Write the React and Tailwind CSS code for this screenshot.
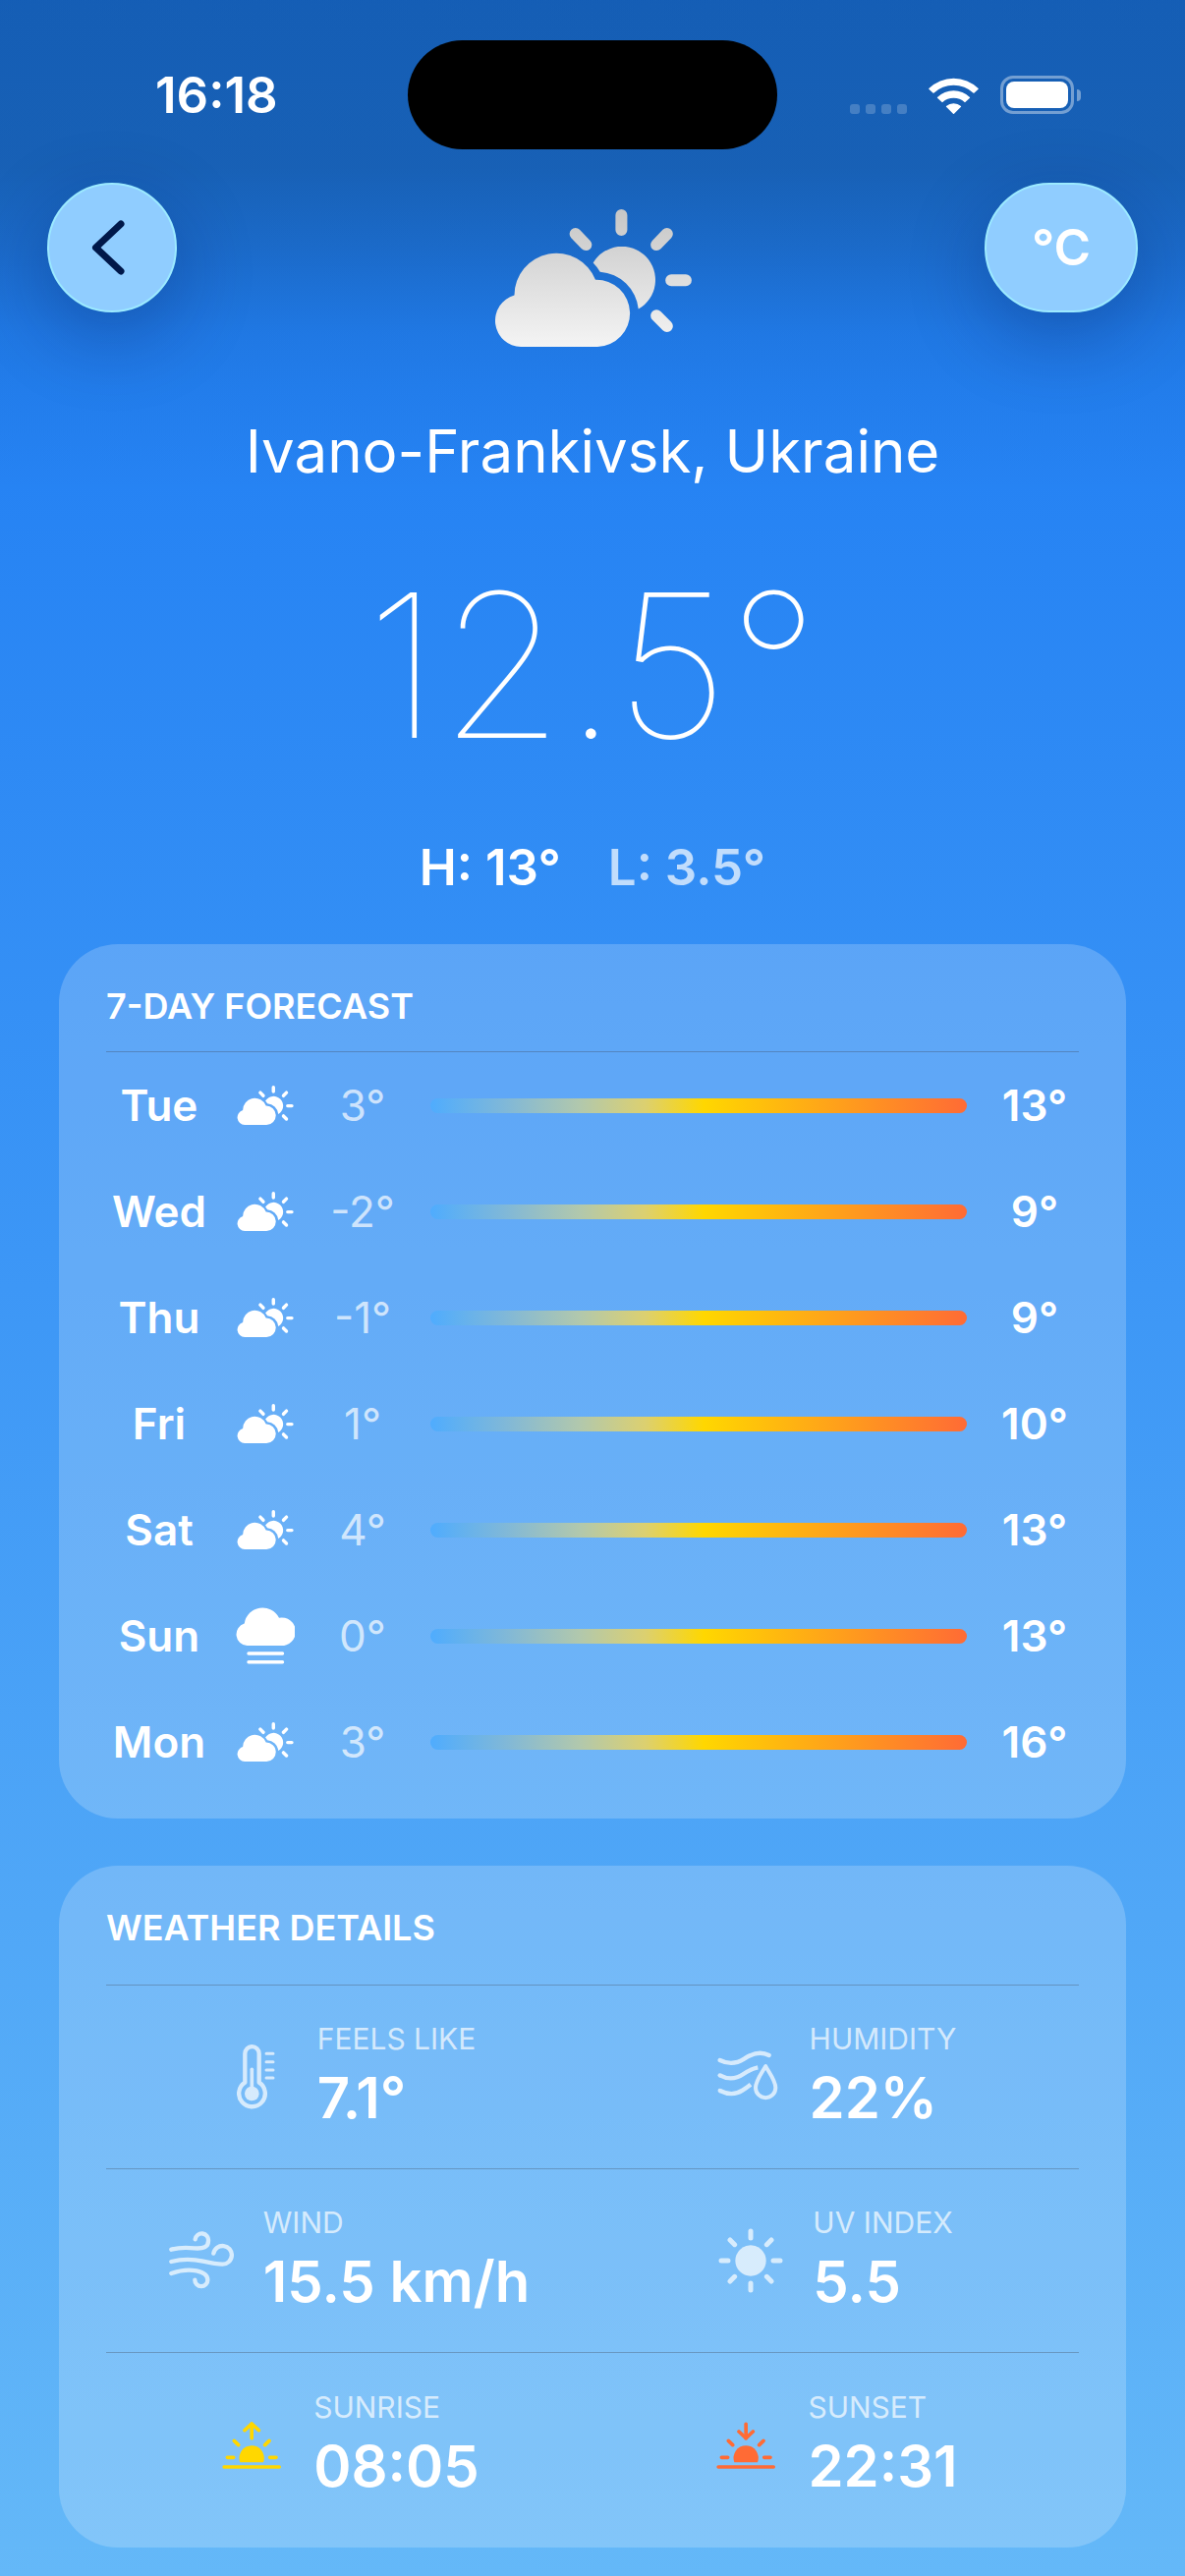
import React, { useState } from "react";

const forecast = [
  { day: "Tue", icon: "partly", low: "3°", high: "13°" },
  { day: "Wed", icon: "partly", low: "-2°", high: "9°" },
  { day: "Thu", icon: "partly", low: "-1°", high: "9°" },
  { day: "Fri", icon: "partly", low: "1°", high: "10°" },
  { day: "Sat", icon: "partly", low: "4°", high: "13°" },
  { day: "Sun", icon: "fog", low: "0°", high: "13°" },
  { day: "Mon", icon: "partly", low: "3°", high: "16°" },
];

const PartlyCloudy = ({ className, fill = "#fff" }) => (
  <svg className={className} viewBox="76 69 601 419" fill={fill} aria-hidden="true">
    <defs>
      <linearGradient id="silver" gradientUnits="userSpaceOnUse" x1="0" y1="69" x2="0" y2="488">
        <stop offset="0" stopColor="#c6c6c6" />
        <stop offset="1" stopColor="#f4f4f4" />
      </linearGradient>
    </defs>
    <path d="M157 488A80 80 0 0 1 137 331A128 128 0 0 1 384 284A102 102 0 0 1 390 488Z" />
    <path d="M377 232A102 102 0 1 1 515 373A126 126 0 0 0 398 260Q389 244 377 232Z" />
    <path
      d="M463 87V132M615 285H659M602 144L570 177M323 144L355 177M570 393L602 425"
      stroke={fill}
      strokeWidth="36"
      strokeLinecap="round"
    />
  </svg>
);

const Fog = ({ className }) => (
  <svg className={className} viewBox="0 0 60 58" fill="#fff" aria-hidden="true">
    <path d="M11.500 39A11.5 11.5 0 0 1 8.700 16.500A18.8 18.8 0 0 1 44 10.700A14.3 14.3 0 1 1 45.500 39Z" />
    <path d="M13 47H47.5M13 55.7H47.5" stroke="#fff" strokeWidth="3.4" strokeLinecap="round" />
  </svg>
);

const Thermometer = () => (
  <svg className="size-[66px] opacity-70" viewBox="75 124 198 198" fill="none" stroke="#fff" strokeLinecap="round" aria-hidden="true">
    <path d="M142 240V152A21.5 21.5 0 0 1 185 152V240A40 40 0 1 1 142 240Z" strokeWidth="13" strokeLinejoin="round" />
    <circle cx="163" cy="274" r="22" fill="#fff" stroke="none" />
    <path d="M163 200V274" strokeWidth="11" />
    <path d="M207 152H228M207 177H228M207 202H228M207 226H228" strokeWidth="9" />
  </svg>
);

const Humidity = () => (
  <svg className="size-[66px] opacity-70" viewBox="77 123 198 198" fill="none" stroke="#fff" strokeWidth="13" aria-hidden="true">
    <path d="M91 171C115 183 140 183 165 167C190 150 215 142 241 156" strokeLinecap="round" />
    <path d="M91 217C115 230 140 229 163 213C178 203 190 196 207 193" />
    <path d="M91 264C115 276 140 276 160 263C168 258 176 252 185 245" />
    <g fill="#fff" stroke="none">
      <circle cx="91" cy="217" r="6.5" />
      <circle cx="91" cy="264" r="6.5" />
    </g>
    <path
      d="M230.5 189C224 203 200 232 200 255A30.5 30.5 0 0 0 261 255C261 232 237 203 230.5 189Z"
      strokeWidth="12"
      strokeLinejoin="round"
    />
  </svg>
);

const Wind = () => (
  <svg className="size-[66px] opacity-70" viewBox="71 145 198 198" fill="none" stroke="#fff" strokeWidth="13" strokeLinecap="round" aria-hidden="true">
    <path d="M78 210C108 202 130 204 148 206C176 208 191 203 191 184A20 20 0 0 0 151 179" />
    <path d="M78 247C115 237 145 239 175 246C197 251 215 255 234 255A28 28 0 1 0 207 222" />
    <path d="M78 283C105 273 135 271 155 275C178 280 189 290 189 303A19.5 19.5 0 0 1 150 303" />
  </svg>
);

const Sun = () => (
  <svg className="size-[66px] opacity-70" viewBox="91 145 198 198" aria-hidden="true">
    <circle cx="190" cy="244" r="47" fill="#fff" />
    <path
      d="M190 154V175M190 313V334M100 244H121M259 244H280M127 181L141 195M239 293L253 307M253 181L239 195M141 293L127 307"
      stroke="#fff"
      strokeWidth="15"
      strokeLinecap="round"
    />
  </svg>
);

const Horizon = ({ color, arrow }) => (
  <svg className="size-[66px]" viewBox="68 131 198 198" fill="none" stroke={color} strokeWidth="11" strokeLinecap="round" strokeLinejoin="round" aria-hidden="true">
    <path d="M132 282A38 38 0 1 1 203 282Z" fill={color} stroke="none" />
    <path d="M83 296H252" strokeWidth="10" />
    <path d="M93 267H112M223 267H242M114 216L127 229M221 216L208 229" />
    <path d="M167.5 165V208" />
    <path d={arrow} />
  </svg>
);

const details = [
  { label: "FEELS LIKE", value: "7.1°", icon: <Thermometer /> },
  { label: "HUMIDITY", value: "22%", icon: <Humidity /> },
  { label: "WIND", value: "15.5 km/h", icon: <Wind /> },
  { label: "UV INDEX", value: "5.5", icon: <Sun /> },
  {
    label: "SUNRISE",
    value: "08:05",
    icon: <Horizon color="#ffd700" arrow="M146 184L167.5 164L189 184" />,
  },
  {
    label: "SUNSET",
    value: "22:31",
    icon: <Horizon color="#ff6b35" arrow="M146 188L167.5 208L189 188" />,
  },
];

const StatusBar = () => (
  <div className="grid grid-cols-[1fr_auto_1fr] items-center pt-[41px]">
    <div className="pl-[158px] text-[51px] leading-[60px] font-semibold">16:18</div>
    <div className="h-[111px] w-[376px] rounded-full bg-black" />
    <div className="flex items-end justify-end gap-[22px] pr-[106px]">
      <div className="flex gap-[6px]">
        <span className="size-[10px] rounded-[3px] bg-white/20" />
        <span className="size-[10px] rounded-[3px] bg-white/20" />
        <span className="size-[10px] rounded-[3px] bg-white/20" />
        <span className="size-[10px] rounded-[3px] bg-white/20" />
      </div>
      <svg className="h-[37px] w-[51px]" viewBox="285 87 153 111" aria-hidden="true">
        <path
          fill="#fff"
          d="M286 120A108 108 0 0 1 437 120Q438 121 437 122L424 134Q423 135 422 134A88 88 0 0 0 301 134Q300 135 299 134L286 122Q285 121 286 120ZM312 147A71 71 0 0 1 411 147Q412 148 411 149L397 162Q396 163 395 162A51 51 0 0 0 328 162Q327 163 326 162L312 149Q311 148 312 147ZM339 174A34 34 0 0 1 384 174Q385 175 384 176L363 197Q361.500 199 360 197L339 176Q338 175 339 174Z"
        />
      </svg>
      <div className="flex items-center gap-[3px]">
        <div className="h-[39px] w-[75px] rounded-[13px] border-[3px] border-white/40 p-[3px]">
          <div className="h-full rounded-[8px] bg-white" />
        </div>
        <div className="h-[12px] w-[4px] rounded-r-full bg-white/40" />
      </div>
    </div>
  </div>
);

const Card = ({ title, titleClass, children }) => (
  <section className="mx-[60px] rounded-[60px] bg-white/20 px-12">
    <h2 className={`border-b border-[#3c3c43]/30 pt-[41px] text-[36px] leading-[44px] font-semibold ${titleClass}`}>
      {title}
    </h2>
    {children}
  </section>
);

const App = () => {
  const [unit, setUnit] = useState("°C");

  return (
    <main className="min-h-screen bg-[linear-gradient(180deg,#1877f2_0%,#3d97f6_50%,#64b8f8_100%)] font-['Inter',sans-serif] text-white">
      <div className="bg-[linear-gradient(180deg,rgba(16,56,90,0.4)_0px,rgba(16,56,90,0.4)_170px,rgba(16,56,90,0.28)_250px,rgba(16,56,90,0.1)_340px,rgba(16,56,90,0.05)_400px,rgba(16,56,90,0)_500px)] pb-[29px]">
        <StatusBar />

        <header className="mt-[34px] grid grid-cols-3 items-start px-12">
          <button
            aria-label="Back"
            className="flex size-[132px] items-center justify-center rounded-full border-2 border-[#9ceaff] bg-[#90cdff] pr-2 shadow-[0_24px_80px_rgba(0,20,80,0.3)]"
          >
            <svg className="h-[56px] w-[34px]" viewBox="0 0 34 56" fill="none" aria-hidden="true">
              <path d="M30 4L4.500 28L30 52" stroke="#00184a" strokeWidth="7" strokeLinecap="round" strokeLinejoin="round" />
            </svg>
          </button>
          <PartlyCloudy className="mt-[27px] h-[140px] w-[201px] justify-self-center" fill="url(#silver)" />
          <button
            onClick={() => setUnit(unit === "°C" ? "°F" : "°C")}
            className="h-[132px] w-[156px] justify-self-end rounded-full border-2 border-[#9ceaff] bg-[#90cdff] text-[51px] font-semibold shadow-[0_24px_80px_rgba(0,20,80,0.3)]"
          >
            {unit}
          </button>
        </header>

        <div className="text-center">
          <h1 className="mt-[66px] text-[60px] leading-[80px] font-normal">Ivano-Frankivsk, Ukraine</h1>
          <p className="mt-[58px] text-[204px] leading-[240px] font-thin">12.5°</p>
          <p className="mt-14 flex justify-center gap-12 text-[51px] leading-[60px] font-semibold">
            <span>H: 13°</span>
            <span className="text-white/70">L: 3.5°</span>
          </p>
        </div>

        <div className="mt-12 flex flex-col gap-12">
          <Card title="7-DAY FORECAST" titleClass="pb-6">
            <ul className="pb-6">
              {forecast.map((item) => (
                <li
                  key={item.day}
                  className="grid h-[108px] grid-cols-[108px_60px_90px_1fr_90px] items-center gap-6 text-center text-[44px]"
                >
                  <span className="font-semibold">{item.day}</span>
                  {item.icon === "fog" ? (
                    <Fog className="h-[58px] w-[60px]" />
                  ) : (
                    <PartlyCloudy className="h-[40px] w-[58px] justify-self-center" />
                  )}
                  <span className="font-normal text-white/70">{item.low}</span>
                  <span className="h-[15px] rounded-full bg-[linear-gradient(90deg,#4facfe_0%,#80b8d8_14%,#b2c8ac_28%,#dcd070_40%,#ffd700_51%,#ff6b35_100%)]" />
                  <span className="font-semibold">{item.high}</span>
                </li>
              ))}
            </ul>
          </Card>

          <Card title="WEATHER DETAILS" titleClass="pb-9">
            <dl className="grid grid-cols-2 pb-[11px]">
              {details.map((item, i) => (
                <div
                  key={item.label}
                  className={`flex h-[187px] items-center justify-center gap-[30px] ${
                    i < 4 ? "border-b border-[#3c3c43]/30" : ""
                  }`}
                >
                  {item.icon}
                  <div>
                    <dt className="text-[30px] leading-[40px] font-normal text-white/70">{item.label}</dt>
                    <dd className="mt-[2px] text-[58px] leading-[76px] font-semibold">{item.value}</dd>
                  </div>
                </div>
              ))}
            </dl>
          </Card>
        </div>
      </div>
    </main>
  );
};

export default App;
